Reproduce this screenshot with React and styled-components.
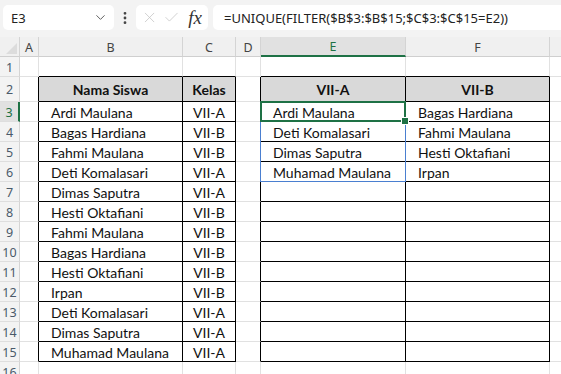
import React from "react";
import styled, { createGlobalStyle } from "styled-components";
import { ChevronDown, EllipsisVertical, X, Check } from "lucide-react";

const GlobalStyle = createGlobalStyle`
  html, body { margin: 0; padding: 0; background: #ffffff; overflow: hidden; }
  * { box-sizing: border-box; }
`;

const COLS = [
  { key: "", w: 20 },
  { key: "A", w: 19 },
  { key: "B", w: 144 },
  { key: "C", w: 53 },
  { key: "D", w: 25 },
  { key: "E", w: 145 },
  { key: "F", w: 144 },
  { key: "G", w: 40 },
];

const rowHeight = (r) => (r === 2 ? 25 : 20);

const students = [
  ["Ardi Maulana", "VII-A"],
  ["Bagas Hardiana", "VII-B"],
  ["Fahmi Maulana", "VII-B"],
  ["Deti Komalasari", "VII-A"],
  ["Dimas Saputra", "VII-A"],
  ["Hesti Oktafiani", "VII-B"],
  ["Fahmi Maulana", "VII-B"],
  ["Bagas Hardiana", "VII-B"],
  ["Hesti Oktafiani", "VII-B"],
  ["Irpan", "VII-B"],
  ["Deti Komalasari", "VII-A"],
  ["Dimas Saputra", "VII-A"],
  ["Muhamad Maulana", "VII-A"],
];

const classA = ["Ardi Maulana", "Deti Komalasari", "Dimas Saputra", "Muhamad Maulana"];
const classB = ["Bagas Hardiana", "Fahmi Maulana", "Hesti Oktafiani", "Irpan"];

const Page = styled.div`
  width: 561px;
  height: 374px;
  overflow: hidden;
  display: flex;
  flex-direction: column;
  background: #ffffff;
`;

const Toolbar = styled.div`
  height: 37px;
  flex: none;
  background: #f3f3f3;
  display: flex;
  align-items: center;
  padding: 0 0 2px 3px;
`;

const Box = styled.div`
  height: 25px;
  background: #ffffff;
  border-radius: 5px;
  display: flex;
  align-items: center;
  font-family: "Noto Sans", "Open Sans", sans-serif;
  color: #222;
`;

const NameBox = styled(Box)`
  width: 111px;
  padding: 0 6px 0 8px;
  font-size: 13px;
  justify-content: space-between;
`;

const Dots = styled.div`
  width: 22px;
  display: flex;
  justify-content: center;
  color: #444;
`;

const FxBox = styled(Box)`
  width: 72px;
  padding: 0 6px 0 5px;
  gap: 5px;
  color: #c4c4c4;
`;

const Fx = styled.span`
  font-family: "Liberation Serif", serif;
  font-style: italic;
  font-size: 19px;
  color: #333;
  margin-left: 3px;
  line-height: 1;
`;

const FormulaBox = styled(Box)`
  flex: 1;
  margin-left: 5px;
  border-radius: 5px 0 0 5px;
  padding-left: 11px;
  font-size: 13px;
  white-space: nowrap;
`;

const Sheet = styled.div`
  position: relative;
  flex: 1;
  display: grid;
  grid-template-columns: ${COLS.map((c) => c.w + "px").join(" ")};
  grid-template-rows: 20px 20px 25px repeat(13, 20px) 20px;
  font-family: "Lato", "Liberation Sans", sans-serif;
`;

const HeadCell = styled.div`
  background: ${(p) => (p.$active ? "#e1e1e1" : "#f0f0f0")};
  border-right: 1px solid #d4d4d4;
  border-bottom: ${(p) => (p.$active ? "2px solid #1e7145" : "1px solid #cfcfcf")};
  color: ${(p) => (p.$active ? "#1e7145" : "#444")};
  font-family: "Noto Sans", "Open Sans", sans-serif;
  font-size: 12.5px;
  display: flex;
  align-items: center;
  justify-content: center;
  padding-top: 1px;
`;

const Corner = styled(HeadCell)`
  align-items: flex-end;
  justify-content: flex-end;
  padding: 0 2px 2px 0;
`;

const RowHead = styled.div`
  background: ${(p) => (p.$active ? "#e1e1e1" : "#f3f3f3")};
  border-right: ${(p) => (p.$active ? "2px solid #1e7145" : "1px solid #d4d4d4")};
  border-bottom: 1px solid #dedede;
  color: ${(p) => (p.$active ? "#1e7145" : "#4a5a6a")};
  font-family: "Noto Sans", "Open Sans", sans-serif;
  font-size: 12.5px;
  display: flex;
  align-items: center;
  justify-content: center;
  padding-top: 1px;
`;

const Cell = styled.div`
  border-right: 1px solid ${(p) => p.$right};
  border-bottom: 1px solid ${(p) => p.$bottom};
  background: ${(p) => (p.$head ? "#d9d9d9" : "#ffffff")};
  font-weight: ${(p) => (p.$head ? 700 : 400)};
  font-size: 14px;
  color: #111;
  display: flex;
  align-items: center;
  justify-content: ${(p) => (p.$center ? "center" : "flex-start")};
  padding: 1px 0 0 ${(p) => (p.$center ? 0 : 12)}px;
  white-space: nowrap;
  overflow: hidden;
`;

const Selection = styled.div`
  position: absolute;
  border: 2px solid #1e7145;
  pointer-events: none;
`;

const FillHandle = styled.div`
  position: absolute;
  right: -4px;
  bottom: -4px;
  width: 6px;
  height: 6px;
  background: #1e7145;
  outline: 1px solid #ffffff;
`;

const SpillRange = styled.div`
  position: absolute;
  border: 1px solid #4a7fd0;
  pointer-events: none;
`;

const GRID = "#e1e1e1";
const BLACK = "#000000";

function cellContent(col, row) {
  if (row === 2) {
    if (col === "B") return { text: "Nama Siswa", head: true, center: true };
    if (col === "C") return { text: "Kelas", head: true, center: true };
    if (col === "E") return { text: "VII-A", head: true, center: true };
    if (col === "F") return { text: "VII-B", head: true, center: true };
  }
  if (row >= 3 && row <= 15) {
    const s = students[row - 3];
    if (col === "B") return { text: s[0] };
    if (col === "C") return { text: s[1], center: true };
    if (col === "E") return { text: classA[row - 3] || "" };
    if (col === "F") return { text: classB[row - 3] || "" };
  }
  return { text: "" };
}

function borders(col, row) {
  const inTable = row >= 2 && row <= 15 && ["B", "C", "E", "F"].includes(col);
  const leftOfTable = row >= 2 && row <= 15 && (col === "A" || col === "D");
  const aboveTable = row === 1 && ["B", "C", "E", "F"].includes(col);
  return {
    right: inTable || leftOfTable ? BLACK : GRID,
    bottom: inTable || aboveTable ? BLACK : GRID,
  };
}

const colLeft = (key) => {
  let x = 0;
  for (const c of COLS) {
    if (c.key === key) return x;
    x += c.w;
  }
  return x;
};
const rowTop = (r) => {
  let y = 20;
  for (let i = 1; i < r; i++) y += rowHeight(i);
  return y;
};

export default function App() {
  const rows = Array.from({ length: 16 }, (_, i) => i + 1);
  const eLeft = colLeft("E");
  const r3Top = rowTop(3);

  return (
    <Page>
      <GlobalStyle />
      <Toolbar>
        <NameBox>
          <span>E3</span>
          <ChevronDown size={15} strokeWidth={1.5} color="#555" />
        </NameBox>
        <Dots>
          <EllipsisVertical size={16} strokeWidth={2.2} />
        </Dots>
        <FxBox>
          <X size={19} strokeWidth={1.1} />
          <Check size={19} strokeWidth={1.1} />
          <Fx>fx</Fx>
        </FxBox>
        <FormulaBox>=UNIQUE(FILTER($B$3:$B$15;$C$3:$C$15=E2))</FormulaBox>
      </Toolbar>

      <Sheet>
        {COLS.map((c) =>
          c.key === "" ? (
            <Corner key="corner">
              <svg width="11" height="11" viewBox="0 0 11 11">
                <polygon points="11,0 11,11 0,11" fill="#dcdcdc" />
              </svg>
            </Corner>
          ) : (
            <HeadCell key={c.key} $active={c.key === "E"}>
              {c.key}
            </HeadCell>
          )
        )}
        {rows.map((r) =>
          COLS.map((c) => {
            if (c.key === "") {
              return (
                <RowHead key={"h" + r} $active={r === 3}>
                  {r}
                </RowHead>
              );
            }
            const content = cellContent(c.key, r);
            const b = borders(c.key, r);
            return (
              <Cell
                key={c.key + r}
                $right={b.right}
                $bottom={b.bottom}
                $head={content.head}
                $center={content.center}
              >
                {content.text}
              </Cell>
            );
          })
        )}
        <SpillRange
          style={{ left: eLeft - 1, top: r3Top - 1, width: 146, height: 81 }}
        />
        <Selection style={{ left: eLeft - 1, top: r3Top - 1, width: 146, height: 21 }}>
          <FillHandle />
        </Selection>
      </Sheet>
    </Page>
  );
}
